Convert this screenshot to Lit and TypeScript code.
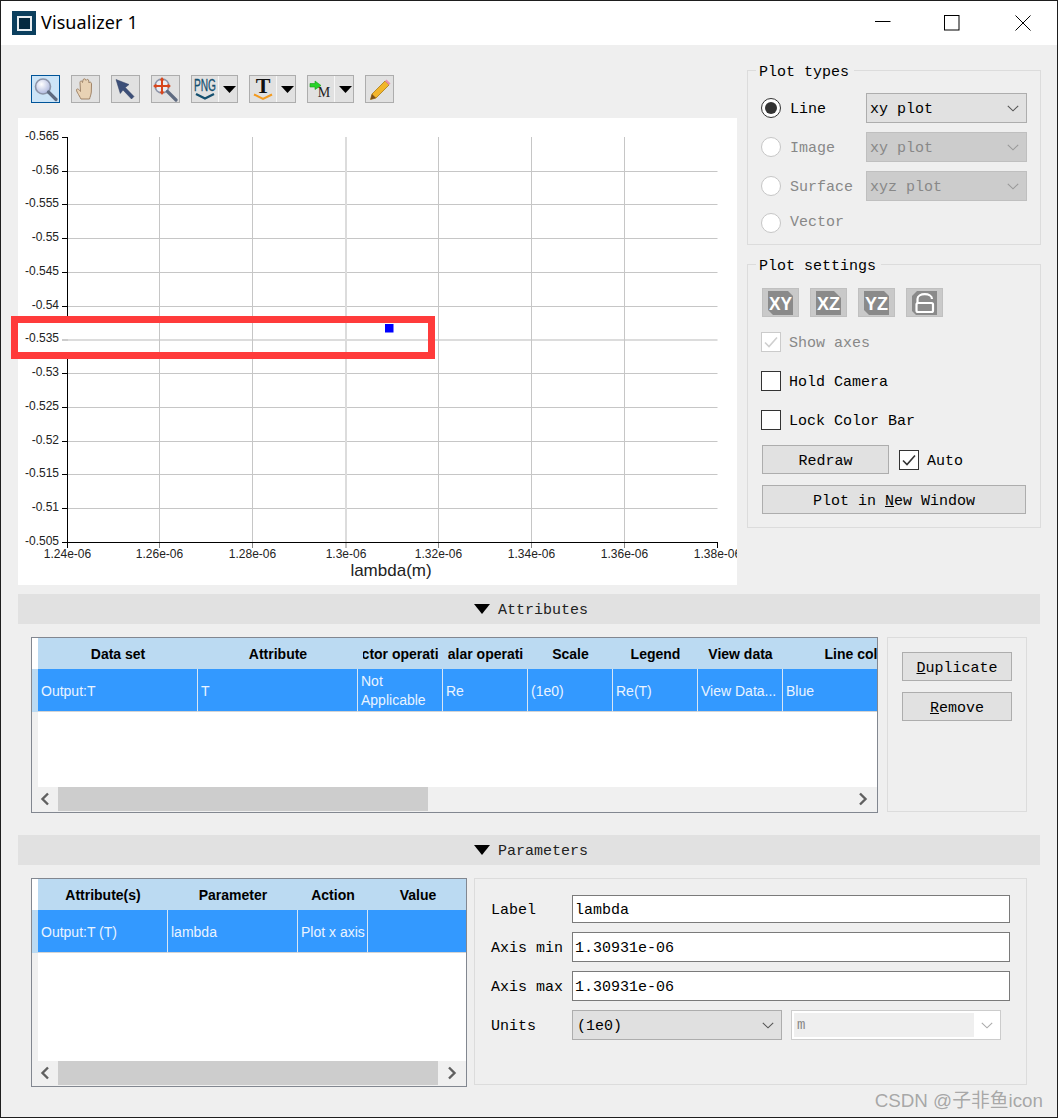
import { LitElement, html, css, svg } from "lit";
import { customElement } from "lit/decorators.js";

const CHEVRON = (c = "#555") => html`<svg class="chev" width="12" height="7" viewBox="0 0 12 7"><path d="M.8 .8 L6 5.800 L11.200 .8" fill="none" stroke=${c} stroke-width="1.100"/></svg>`;
const ARROW = html`<svg class="drop" width="13" height="7" viewBox="0 0 13 7"><path d="M0 0H13L6.500 7Z" fill="#000"/></svg>`;

const yLabels = ["-0.565","-0.56","-0.555","-0.55","-0.545","-0.54","-0.535","-0.53","-0.525","-0.52","-0.515","-0.51","-0.505"];
const xLabels = ["1.24e-06","1.26e-06","1.28e-06","1.3e-06","1.32e-06","1.34e-06","1.36e-06","1.38e-06"];
const xPos = [49.5,141.5,234.5,328,420.5,513.5,606.5,699.5];

function plot() {
  const top = 19.3, step = 33.75;
  return html`<svg class="plot" width="719" height="467" viewBox="0 0 719 467">
    ${yLabels.map((l, i) => {
      const y = top + step * i;
      const py = Math.floor(y) + 0.5;
      const special = i === 6;
      return svg`
        ${i > 0 && i < 12 ? svg`<line x1="50" x2="699.5" y1=${special ? 222 : py} y2=${special ? 222 : py} stroke=${special ? "#dcdcdc" : "#c6c6c6"} stroke-width=${special ? 2 : 1}/>` : ""}
        <line x1="44" x2="50" y1=${special ? 222 : py} y2=${special ? 222 : py} stroke=${special ? "#999" : "#000"}/>
        <text class="tick" x="41" y=${y - 1.6 + 4.2} text-anchor="end">${l}</text>`;
    })}
    ${xLabels.map((l, i) => {
      const x = xPos[i];
      const special = i === 3;
      return svg`
        ${i > 0 && i < 7 ? svg`<line x1=${special ? 328 : x} x2=${special ? 328 : x} y1="19" y2="424" stroke=${special ? "#dcdcdc" : "#c6c6c6"} stroke-width=${special ? 2 : 1}/>` : ""}
        <line x1=${x} x2=${x} y1="424" y2="430" stroke=${i === 0 || i === 7 ? "#000" : "#888"}/>
        <text class="tick" x=${x} y="440" text-anchor="middle">${l}</text>`;
    })}
    <line x1="49.5" x2="49.5" y1="19" y2="204" stroke="#000"/>
    <line x1="49.5" x2="49.5" y1="234" y2="425" stroke="#000"/>
    <line x1="49" x2="700" y1="424.5" y2="424.5" stroke="#000"/>
    <rect x="367" y="206" width="8.500" height="8.500" fill="#0000ff"/>
    <text class="axis" x="373" y="458" text-anchor="middle">lambda(m)</text>
  </svg>`;
}

const icons = {
  zoom: html`<svg width="27" height="26" viewBox="0 0 27 26">
    <defs><radialGradient id="gl" cx="40%" cy="35%" r="70%"><stop offset="0" stop-color="#fff"/><stop offset="1" stop-color="#a9b4dc"/></radialGradient></defs>
    <circle cx="11" cy="10.500" r="7.500" fill="url(#gl)" stroke="#8c94a8" stroke-width="1.600"/>
    <path d="M16.500 16 L24 23.500" stroke="#5f6b80" stroke-width="3.200" stroke-linecap="round"/>
  </svg>`,
  hand: html`<svg width="27" height="26" viewBox="0 0 27 26">
    <path d="M9 23 C7 19 4 15 4.500 13.500 C5.500 12 7.500 14 8.500 15.500 L8 6.500 C8 4.500 10.200 4.500 10.500 6.500 L11 4 C11.500 2.300 13.500 2.500 13.800 4.200 L14.200 4.300 C14.800 2.800 16.800 3.200 16.800 5 L17 7 C17.500 5.600 19.500 6 19.500 7.800 L19.300 16 C19 19 18 21 17.500 23 Z" fill="#e9d2b4" stroke="#a08468" stroke-width="1"/>
  </svg>`,
  arrow: html`<svg width="27" height="26" viewBox="0 0 27 26">
    <path d="M4 3.500 L17 8.500 L13.300 11.500 L22 20.500 L19.500 23 L11 14 L8.300 17.500 Z" fill="#3c4f78" stroke="#2e3d60" stroke-width=".5"/>
  </svg>`,
  zoomExt: html`<svg width="27" height="26" viewBox="0 0 27 26">
    <circle cx="10" cy="10" r="7" fill="#e8ecf4" stroke="#8c94a8" stroke-width="1.500"/>
    <path d="M15.500 15.500 L24 24" stroke="#5f6b80" stroke-width="3.200" stroke-linecap="round"/>
    <path d="M10 3.500V16.500M3.500 10H16.500" stroke="#d8461c" stroke-width="2"/>
    <path d="M10 1L7.500 4.500H12.500ZM10 19L7.500 15.500H12.500ZM1 10L4.500 7.500V12.500ZM19 10L15.500 7.500V12.500Z" fill="#d8461c"/>
  </svg>`,
  png: html`<svg width="26" height="26" viewBox="0 0 26 26">
    <text x="13" y="14.700" text-anchor="middle" font-family="Liberation Sans, sans-serif" font-size="16.500" textLength="22" lengthAdjust="spacingAndGlyphs" fill="#14506f" stroke="#14506f" stroke-width=".3">PNG</text>
    <path d="M4 18 L13 22.500 L22 18" fill="none" stroke="#14506f" stroke-width="2.400"/>
  </svg>`,
  text: html`<svg width="26" height="26" viewBox="0 0 26 26">
    <text x="13" y="17" text-anchor="middle" font-family="Liberation Serif, serif" font-weight="700" font-size="22" fill="#111">T</text>
    <path d="M4 18.500 L13 23 L22 18.500" fill="none" stroke="#f39a1e" stroke-width="2"/>
  </svg>`,
  marker: html`<svg width="26" height="26" viewBox="0 0 26 26">
    <path d="M2 7.500 H7 V5 L13 9.500 L7 13.500 V11 H2Z" fill="#27d327" stroke="#159c15" stroke-width=".6"/>
    <text x="16" y="20.700" text-anchor="middle" font-family="Liberation Serif, serif" font-size="14" fill="#222">M</text>
  </svg>`,
  pencil: html`<svg width="27" height="26" viewBox="0 0 27 26">
    <path d="M6 18 L19 5 L23 9 L10 22 L4.500 23.500 Z" fill="#f2b52a" stroke="#a97a14" stroke-width=".8"/>
    <path d="M19 5 L20.500 3.500 L24.500 7.500 L23 9 Z" fill="#e98fb0"/>
    <path d="M4.500 23.500 L6 18 L10 22 Z" fill="#7a4f1a"/>
  </svg>`,
};

const axisIcon = (label: string, notch: number) => html`<button class="planebtn" disabled>
  <svg width="25" height="24" viewBox="0 0 25 24">
    <path d=${notch === 0 ? "M0 0H20L25 5V24H5L0 19Z" : notch === 1 ? "M0 0H18L25 7V24H0Z" : "M0 0H20L25 5V24H5L0 19Z"} fill="#8a8a8a"/>
    <text x="12.500" y="18.500" text-anchor="middle" font-family="Liberation Sans, sans-serif" font-weight="700" font-size="17.500" textLength="23" lengthAdjust="spacingAndGlyphs" fill="#fff">${label}</text>
  </svg></button>`;

const lockIcon = html`<button class="planebtn" disabled>
  <svg width="25" height="24" viewBox="0 0 25 24">
    <path d="M0 5L5 0H25V24H4L0 20Z" fill="#8a8a8a"/>
    <rect x="4.500" y="12" width="16.500" height="9" rx="1.500" fill="none" stroke="#fff" stroke-width="2.200"/>
    <path d="M5.500 12 V8 C5.500 1.500 20 1.500 20 8" fill="none" stroke="#fff" stroke-width="2.200"/>
  </svg></button>`;

const check = (c: string) => html`<svg width="18" height="18" viewBox="0 0 18 18"><path d="M3 9.500 L7 13.500 L15 4.500" fill="none" stroke=${c} stroke-width="1.600"/></svg>`;

interface Table {
  cols: number[];
  head: string[];
  row: string[];
  thumb: number;
}

const table1: Table = {
  cols: [160, 160, 85, 85, 85, 85, 85, 150],
  head: ["Data set", "Attribute", "Vector operation", "Scalar operation", "Scale", "Legend", "View data", "Line color"],
  row: ["Output:T", "T", "Not Applicable", "Re", "(1e0)", "Re(T)", "View Data...", "Blue"],
  thumb: 370,
};
const table2: Table = {
  cols: [130, 130, 70, 100],
  head: ["Attribute(s)", "Parameter", "Action", "Value"],
  row: ["Output:T (T)", "lambda", "Plot x axis", ""],
  thumb: 380,
};

const gridTable = (t: Table, cls: string) => {
  const tpl = t.cols.map((c) => c + "px").join(" ");
  return html`<div class="tbl ${cls}">
    <div class="view">
      <div class="gutter"><i class="g1"></i><i class="g2"></i><i class="g3"></i></div>
      <div class="data">
        <div class="hrow" style="grid-template-columns:${tpl}">${t.head.map((h) => html`<div class="hcell"><span>${h}</span></div>`)}</div>
        <div class="drow" style="grid-template-columns:${tpl}">${t.row.map((c) => html`<div class="dcell">${c}</div>`)}</div>
      </div>
    </div>
    <div class="sbar">
      <div class="sbtn"><svg width="12" height="14" viewBox="0 0 12 14"><path d="M9 1.500 L3.500 7 L9 12.500" fill="none" stroke="#606060" stroke-width="2.400"/></svg></div>
      <div class="thumb" style="width:${t.thumb}px"></div>
      <div class="strack"></div>
      <div class="sbtn"><svg width="12" height="14" viewBox="0 0 12 14"><path d="M3 1.500 L8.500 7 L3 12.500" fill="none" stroke="#606060" stroke-width="2.400"/></svg></div>
    </div>
  </div>`;
};

const sectionBar = (t: string) => html`<div class="bar"><svg width="16" height="10" viewBox="0 0 16 10"><path d="M0 0H16L8 10Z" fill="#000"/></svg><span>${t}</span></div>`;

@customElement("app-root")
export class AppRoot extends LitElement {
  static styles = css`
    :host { display: block; width: 1058px; height: 1118px; font-family: "Liberation Mono", monospace; font-size: 15px; color: #000; }
    * { box-sizing: border-box; }
    .window { position: relative; width: 1058px; height: 1118px; border: 1px solid #1e1e1e; background: #efefef; display: flex; flex-direction: column; overflow: hidden; }
    .titlebar { height: 44px; flex: none; background: #fff; display: flex; align-items: center; padding-left: 11px; }
    .appicon { width: 24px; height: 24px; background: #0b3f5e; display: flex; align-items: center; justify-content: center; }
    .appicon i { display: block; width: 15px; height: 15px; border: 2px solid #e8eef2; background: #052a40; }
    .title { margin-left: 5px; padding-bottom: 2px; font: 18px "Noto Sans", sans-serif; letter-spacing: .1px; }
    .controls { margin-left: auto; padding-right: 26px; display: flex; gap: 55px; align-items: center; }
    .controls .min { margin-right: -2px; }
    .controls svg { display: block; }
    .body { flex: 1; padding: 0 16px 0 17px; display: flex; flex-direction: column; }
    .top { height: 540px; display: flex; gap: 10px; flex: none; }
    .left { width: 719px; padding-top: 30px; display: flex; flex-direction: column; gap: 15px; }
    .right { width: 294px; padding-top: 25px; display: flex; flex-direction: column; gap: 19px; }
    .toolbar { height: 28px; margin-left: 13px; display: flex; gap: 11px; }
    .tool { width: 29px; height: 28px; background: #e1e1e1; border: 1px solid #adadad; padding: 0; display: flex; align-items: center; justify-content: center; }
    .tool.on { background: #cce4f7; border-color: #005499; }
    .tool.split { width: 47px; justify-content: flex-start; }
    .tool.split .cell { width: 27px; height: 26px; display: flex; align-items: center; justify-content: center; border-right: 1px solid #f7f7f7; flex: none; }
    .tool.split .drop { margin-left: 4px; }
    .plot { display: block; background: #fff; overflow: hidden; }
    .plot .tick { font: 12px "Liberation Sans", sans-serif; fill: #222; }
    .plot .axis { font: 17px "Liberation Sans", sans-serif; fill: #222; }
    .group { border: 1px solid #dcdcdc; padding: 0 13px; }
    .gtitle { width: fit-content; height: 20px; line-height: 24px; margin: -10px 0 0 -5px; background: #efefef; padding: 0 5px 0 3px; }
    .types { height: 175px; }
    .settings { height: 264px; }
    .typerows { margin-top: 12px; display: grid; grid-template-columns: 20px 67px 161px; column-gap: 9px; grid-auto-rows: 30px; row-gap: 9px; align-items: center; }
    .typerows .last { margin-top: -4px; }
    .typerows .off-t.last { margin-top: -6px; }
    .lbl { padding-top: 2px; }
    .radio { width: 20px; height: 20px; border-radius: 50%; border: 1.500px solid #333; background: #fff; display: flex; align-items: center; justify-content: center; }
    .radio i { width: 12px; height: 12px; background: #333; border-radius: 50%; }
    .radio.off { border-color: #c6c6c6; }
    .off-t { color: #888; }
    .combo { height: 30px; background: #e1e1e1; border: 1px solid #adadad; display: flex; align-items: center; padding: 2px 3px 0; justify-content: space-between; }
    .combo .chev { margin: -2px 4px 0 0; flex: none; }
    .combo.dis { background: #ccc; border-color: #bfbfbf; color: #888; }
    .col { margin-top: 13px; display: flex; flex-direction: column; }
    .planes { height: 29px; margin-left: 1px; display: flex; gap: 11px; }
    .planebtn { width: 37px; height: 29px; padding: 0; background: #c9c9c9; border: 1px solid #c0c0c0; display: flex; align-items: center; justify-content: center; }
    .chk { display: flex; align-items: center; gap: 8px; height: 20px; }
    .chk span { padding-top: 2px; }
    .chk.tall span { padding-top: 4px; }
    .box { width: 20px; height: 20px; background: #fff; border: 1.500px solid #333; display: flex; align-items: center; justify-content: center; flex: none; }
    .box.off { border-color: #cbcbcb; }
    .c1 { margin-top: 15px; }
    .c2 { margin-top: 19px; }
    .btn { height: 29px; background: #e1e1e1; border: 1px solid #adadad; display: flex; align-items: center; justify-content: center; padding: 4px 0 0; font: inherit; color: #000; }
    .redrawrow { margin: 15px 0 0 1px; display: flex; align-items: center; gap: 10px; }
    .redraw { width: 127px; }
    .plotnew { width: 264px; margin: 11px 0 0 1px; }
    .bar { height: 30px; width: 1022px; margin-top: 9px; flex: none; background: #e1e1e1; display: flex; align-items: center; justify-content: center; gap: 8px; padding-left: 4px; color: #222; }
    .bar span { padding-top: 2px; }
    .attrs { margin: 13px 0 0 13px; height: 176px; display: flex; gap: 9px; flex: none; align-items: flex-start; }
    .attrs .tbl { height: 176px; }
    .bar2 { margin-top: 13px; }
    .params { margin: 13px 0 0 13px; height: 209px; display: flex; gap: 7px; flex: none; align-items: flex-start; }
    .params .tbl { height: 209px; }
    .tbl { border: 1px solid #828790; background: #fff; display: flex; flex-direction: column; overflow: hidden; font-family: "Liberation Sans", sans-serif; font-size: 14px; }
    .t1 { width: 847px; }
    .t2 { width: 436px; }
    .view { flex: 1; display: flex; min-height: 0; }
    .gutter { width: 6px; flex: none; display: flex; flex-direction: column; }
    .g1 { display: block; height: 31px; background: #fff; }
    .g2 { display: block; height: 43px; background: #bbdaf2; }
    .g3 { display: block; flex: 1; background: #f0f0f0; }
    .data { flex: 1; min-width: 0; overflow: hidden; }
    .hrow, .drow { display: grid; width: max-content; }
    .hrow { height: 31px; background: #bbdaf2; min-width: 100%; }
    .drow { height: 43px; background: #3399ff; min-width: 100%; }
    .hcell { height: 31px; margin: 0 5px; overflow: hidden; display: flex; align-items: center; justify-content: center; font-weight: 700; white-space: nowrap; }
    .hcell span { flex: none; }
    .dcell { height: 43px; background: #3399ff; color: #eaf4ff; border-right: 1px solid #d8e6f4; border-bottom: 1px solid #d4d4d4; padding: 2px 0 0 3px; display: flex; align-items: center; line-height: 19px; }
    .sbar { height: 25px; flex: none; background: #f0f0f0; display: flex; align-items: stretch; padding-bottom: 1px; }
    .sbtn { width: 26px; flex: none; display: flex; align-items: center; justify-content: center; }
    .thumb { background: #cdcdcd; flex: none; }
    .strack { flex: 1; }
    .sbar .sbtn:last-child { width: 28px; }
    .side { width: 140px; height: 175px; border: 1px solid #dcdcdc; padding: 14px 14px; display: flex; flex-direction: column; gap: 11px; }
    .side .btn { width: 110px; flex: none; }
    .panel { width: 553px; height: 207px; border: 1px solid #dcdcdc; padding: 16px 16px 0; display: grid; grid-template-columns: 81px 210px 9px 210px 8px; grid-template-rows: 28px 30px 30px 30px; row-gap: 9px; align-items: center; align-content: start; }
    .plabel { padding-top: 2px; }
    .input { grid-column: 2 / span 4; width: 438px; height: 100%; border: 1px solid #7a7a7a; background: #fff; padding: 2px 2px 0; display: flex; align-items: center; }
    .combo.units { padding-left: 4px; background: #e0e0e0; }
    .combo.unit2 { grid-column: 4; background: #fff; border: 1px solid #ccc; padding: 2px 3px 2px 2px; color: #888; }
    .combo.unit2 .chev { margin-top: 0; }
    .unit2 .inner { width: 180px; height: 100%; background: #efefef; display: flex; align-items: center; padding-left: 3px; font-size: 14px; }
    .mark { position: absolute; left: 10px; top: 315px; width: 424px; height: 43px; border: 7px solid #ff3b3b; }
    .wm { position: absolute; right: 14px; top: 1084px; font: 18.800px "Liberation Sans", "Noto Sans CJK SC", sans-serif; color: rgba(120, 120, 120, .62); white-space: nowrap; }
  `;

  render() {
    return html`<div class="window">
      <header class="titlebar">
        <div class="appicon"><i></i></div>
        <div class="title">Visualizer 1</div>
        <div class="controls">
          <svg class="min" width="16" height="16" viewBox="0 0 16 16"><path d="M0 6.500H15.500" stroke="#000"/></svg>
          <svg width="16" height="16" viewBox="0 0 16 16"><rect x=".5" y=".5" width="14.500" height="14.500" fill="none" stroke="#000"/></svg>
          <svg width="16" height="16" viewBox="0 0 16 16"><path d="M.5 .5L15.500 15.500M15.500 .5L.5 15.500" stroke="#000"/></svg>
        </div>
      </header>
      <main class="body">
        <div class="top">
          <div class="left">
            <div class="toolbar">
              <div class="tool on">${icons.zoom}</div>
              <div class="tool">${icons.hand}</div>
              <div class="tool">${icons.arrow}</div>
              <div class="tool">${icons.zoomExt}</div>
              <div class="tool split"><div class="cell">${icons.png}</div>${ARROW}</div>
              <div class="tool split"><div class="cell">${icons.text}</div>${ARROW}</div>
              <div class="tool split"><div class="cell">${icons.marker}</div>${ARROW}</div>
              <div class="tool">${icons.pencil}</div>
            </div>
            ${plot()}
          </div>
          <div class="right">
            <section class="group types">
              <div class="gtitle">Plot types</div>
              <div class="typerows">
                <div class="radio"><i></i></div><div class="lbl">Line</div><div class="combo"><span>xy plot</span>${CHEVRON()}</div>
                <div class="radio off"></div><div class="off-t lbl">Image</div><div class="combo dis"><span>xy plot</span>${CHEVRON("#999")}</div>
                <div class="radio off"></div><div class="off-t lbl">Surface</div><div class="combo dis"><span>xyz plot</span>${CHEVRON("#999")}</div>
                <div class="radio off last"></div><div class="off-t last">Vector</div>
              </div>
            </section>
            <section class="group settings">
              <div class="gtitle">Plot settings</div>
              <div class="col">
                <div class="planes">${axisIcon("XY", 0)}${axisIcon("XZ", 1)}${axisIcon("YZ", 2)}${lockIcon}</div>
                <div class="chk c1"><div class="box off">${check("#cfcfcf")}</div><span class="off-t">Show axes</span></div>
                <div class="chk c2"><div class="box"></div><span>Hold Camera</span></div>
                <div class="chk c2"><div class="box"></div><span>Lock Color Bar</span></div>
                <div class="redrawrow">
                  <button class="btn redraw">Redraw</button>
                  <div class="chk tall"><div class="box">${check("#333")}</div><span>Auto</span></div>
                </div>
                <button class="btn plotnew"><span>Plot in <u>N</u>ew Window</span></button>
              </div>
            </section>
          </div>
        </div>
        ${sectionBar("Attributes")}
        <div class="attrs">
          ${gridTable(table1, "t1")}
          <div class="side">
            <button class="btn"><span><u>D</u>uplicate</span></button>
            <button class="btn"><span><u>R</u>emove</span></button>
          </div>
        </div>
        <div class="bar2">${sectionBar("Parameters")}</div>
        <div class="params">
          ${gridTable(table2, "t2")}
          <div class="panel">
            <div class="plabel">Label</div><div class="input">lambda</div>
            <div class="plabel">Axis min</div><div class="input">1.30931e-06</div>
            <div class="plabel">Axis max</div><div class="input">1.30931e-06</div>
            <div class="plabel">Units</div>
            <div class="combo units"><span>(1e0)</span>${CHEVRON()}</div>
            <div class="combo unit2"><div class="inner">m</div>${CHEVRON("#aaa")}</div>
          </div>
        </div>
      </main>
      <div class="mark"></div>
      <div class="wm">CSDN @子非鱼icon</div>
    </div>`;
  }
}
